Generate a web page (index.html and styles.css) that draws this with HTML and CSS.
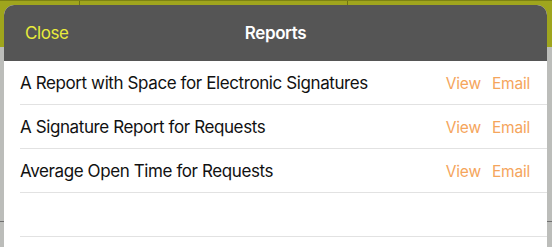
FILE: index.html
```html
<!DOCTYPE html>
<html>
<head>
<meta charset="utf-8">
<link rel="stylesheet" href="styles.css">
</head>
<body>
<div class="screen">
  <div class="backdrop">
    <div class="band">
      <span class="vline vline-a"></span>
      <span class="vline vline-b"></span>
    </div>
    <span class="hline hline-left"></span>
    <span class="hline hline-right"></span>
  </div>
  <div class="modal">
    <div class="header">
      <span class="close">Close</span>
      <span class="title">Reports</span>
    </div>
    <ul class="list">
      <li class="row">
        <span class="name">A Report with Space for Electronic Signatures</span>
        <span class="actions"><span class="action">View</span><span class="action">Email</span></span>
      </li>
      <li class="row">
        <span class="name">A Signature Report for Requests</span>
        <span class="actions"><span class="action">View</span><span class="action">Email</span></span>
      </li>
      <li class="row">
        <span class="name">Average Open Time for Requests</span>
        <span class="actions"><span class="action">View</span><span class="action">Email</span></span>
      </li>
      <li class="row empty"></li>
    </ul>
  </div>
</div>
</body>
</html>
```

FILE: styles.css
```css
html, body {
  margin: 0;
  padding: 0;
}
body {
  width: 552px;
  height: 247px;
  overflow: hidden;
  background: #bcbdba;
  font-family: "Inter", "Liberation Sans", sans-serif;
  letter-spacing: -0.4px;
}
.screen {
  position: relative;
  width: 552px;
  height: 247px;
  overflow: hidden;
}
.backdrop {
  position: absolute;
  inset: 0;
}
.band {
  position: relative;
  height: 46px;
  background: #9fa51d;
  border-top: 1px solid #7d8214;
}
.vline {
  position: absolute;
  top: 0;
  width: 1px;
  height: 46px;
  background: #6f7412;
}
.vline-a { left: 79px; }
.vline-b { left: 347px; }
.hline {
  position: absolute;
  top: 221px;
  height: 1px;
  width: 5px;
  background: #707070;
}
.hline-left { left: 0; }
.hline-right { right: 0; }
.modal {
  position: absolute;
  left: 4px;
  top: 5px;
  width: 543px;
  height: 260px;
  background: #ffffff;
  border-radius: 10px 10px 0 0;
  overflow: hidden;
}
.header {
  position: relative;
  height: 56px;
  background: #555555;
  display: flex;
  align-items: center;
  justify-content: center;
}
.close {
  position: absolute;
  left: 21px;
  top: 18px;
  color: #e8eb3c;
  font-size: 17px;
}
.title {
  color: #ffffff;
  font-size: 17px;
  font-weight: 600;
  margin-top: 0;
}
.list {
  list-style: none;
  margin: 0;
  padding: 0 0 0 16px;
}
.row {
  height: 43px;
  border-bottom: 1px solid #e2e2e2;
  display: flex;
  align-items: center;
  justify-content: space-between;
  padding-right: 17px;
}
.name {
  color: #111111;
  font-size: 17px;
}
.actions {
  display: flex;
  gap: 11px;
  margin-top: 1px;
}
.action {
  color: #f5a55c;
  font-size: 15.5px;
  letter-spacing: -0.2px;
}
```
